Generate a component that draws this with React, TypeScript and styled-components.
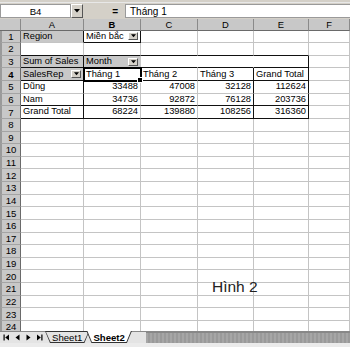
import styled, { createGlobalStyle } from "styled-components";

const GlobalStyle = createGlobalStyle`
  html, body {
    margin: 0;
    padding: 0;
    background: #ffffff;
  }
  body {
    font-family: "Liberation Sans", Arial, sans-serif;
    font-size: 9.3px;
    color: #000;
  }
`;

const GRID = "#c4c4c4";
const DARK = "#111";
const FACE = "#c8c8c8";

const Window = styled.div`
  width: 350px;
  height: 347px;
  overflow: hidden;
  display: flex;
  flex-direction: column;
  background: #d4d0c8;
`;

const Toolbar = styled.div`
  height: 3px;
  background: #d4d0c8;
  border-bottom: 1px solid #e8e8e8;
  box-sizing: border-box;
`;

const FormulaBar = styled.div`
  height: 16px;
  display: flex;
  align-items: flex-start;
  padding-top: 1px;
  box-sizing: border-box;
`;

const NameBox = styled.div`
  width: 71px;
  height: 14px;
  background: #fff;
  border: 1px solid #9a9a9a;
  box-sizing: border-box;
  display: flex;
  align-items: center;
  justify-content: center;
  font-size: 9.6px;
`;

const NameDrop = styled.div`
  width: 12px;
  height: 14px;
  box-sizing: border-box;
  background: #d4d0c8;
  border: 1px solid;
  border-color: #fff #555 #555 #fff;
  display: flex;
  align-items: center;
  justify-content: center;
`;

const EqualsArea = styled.div`
  width: 42px;
  height: 14px;
  display: flex;
  align-items: center;
  justify-content: flex-end;
  padding-right: 7px;
  box-sizing: border-box;
  font-weight: bold;
  font-size: 10px;
`;

const FormulaInput = styled.div`
  flex: 1;
  height: 14px;
  background: #fff;
  border: 1px solid #9a9a9a;
  border-right: none;
  box-sizing: border-box;
  display: flex;
  align-items: center;
  padding-left: 4px;
  font-size: 10px;
`;

const Sheet = styled.div`
  position: relative;
  height: 312px;
  overflow: hidden;
  background: #fff;
  display: grid;
  grid-template-columns: 21px 63px 57px 57px 56px 55px 1fr;
  grid-template-rows: 11.5px repeat(24, 12.63px);
`;

type Line = "grid" | "dark" | "none";

const lineColor = (l: Line) =>
  l === "dark" ? DARK : l === "grid" ? GRID : "transparent";

const Cell = styled.div<{
  $right: Line;
  $bottom: Line;
  $field?: boolean;
  $align?: "left" | "right";
  $selected?: boolean;
}>`
  position: relative;
  box-sizing: border-box;
  border-right: 1px solid ${(p) => lineColor(p.$right)};
  border-bottom: 1px solid ${(p) => lineColor(p.$bottom)};
  background: ${(p) => (p.$field ? FACE : "#fff")};
  display: flex;
  align-items: center;
  justify-content: ${(p) => (p.$align === "right" ? "flex-end" : "space-between")};
  padding: 0 2px;
  white-space: nowrap;
  overflow: visible;
  line-height: 1;
  ${(p) =>
    p.$selected &&
    `
    outline: 2px solid #000;
    outline-offset: -1px;
    z-index: 2;
  `}
`;

const FillHandle = styled.span`
  position: absolute;
  right: -3px;
  bottom: -3px;
  width: 4px;
  height: 4px;
  background: #000;
  border: 1px solid #fff;
`;

const ColHead = styled.div<{ $bold?: boolean }>`
  background: ${FACE};
  border-right: 1px solid #8a8a8a;
  border-bottom: 1px solid #6a6a6a;
  box-sizing: border-box;
  display: flex;
  align-items: center;
  justify-content: center;
  font-size: 9.4px;
  font-weight: ${(p) => (p.$bold ? "bold" : "normal")};
`;

const RowHead = styled.div<{ $bold?: boolean }>`
  background: ${FACE};
  border-left: 2px solid #9a9a9a;
  border-right: 1px solid #6a6a6a;
  border-bottom: 1px solid #a4a4a4;
  box-sizing: border-box;
  display: flex;
  align-items: center;
  justify-content: center;
  font-size: 9.6px;
  font-weight: ${(p) => (p.$bold ? "bold" : "normal")};
`;

const DropButton = styled.span`
  width: 10px;
  height: 8px;
  box-sizing: border-box;
  background: #d4d0c8;
  border: 1px solid;
  border-color: #fff #555 #555 #fff;
  display: inline-flex;
  align-items: center;
  justify-content: center;
  flex-shrink: 0;
`;

const Caption = styled.div`
  position: absolute;
  left: 212px;
  top: 260px;
  font-size: 15.5px;
  line-height: 16px;
  color: #222;
`;

const TabBar = styled.div`
  height: 12px;
  display: flex;
  align-items: stretch;
  background: #e4e4e4;
  border-top: 1px solid #888;
  box-sizing: border-box;
`;

const NavButtons = styled.div`
  width: 46px;
  display: flex;
  align-items: center;
  justify-content: space-around;
  padding: 0 1px;
  box-sizing: border-box;
`;

const NavButton = styled.span`
  display: inline-flex;
  align-items: center;
  justify-content: center;
  width: 10px;
  height: 10px;
`;

const Tabs = styled.div`
  display: flex;
  padding-left: 2px;
  width: 92px;
`;

const Tab = styled.div<{ $active?: boolean }>`
  position: relative;
  padding: 0 7px;
  margin-left: -3px;
  font-size: 9.6px;
  font-weight: ${(p) => (p.$active ? "bold" : "normal")};
  display: flex;
  align-items: center;
  z-index: ${(p) => (p.$active ? 2 : 1)};
  &::before {
    content: "";
    position: absolute;
    inset: -1px 0 0 0;
    background: #333;
    clip-path: polygon(0 0, 100% 0, calc(100% - 5px) 100%, 5px 100%);
    z-index: -2;
  }
  &::after {
    content: "";
    position: absolute;
    inset: ${(p) => (p.$active ? "-1px" : "0")} 1px 1px 1px;
    background: ${(p) => (p.$active ? "#fff" : "#e4e4e4")};
    clip-path: polygon(0 0, 100% 0, calc(100% - 4.5px) 100%, 4.5px 100%);
    z-index: -1;
  }
`;

const Scroll = styled.div`
  flex: 1;
  margin-left: 6px;
  background: repeating-linear-gradient(
      90deg,
      #a6a6a6 0 2px,
      #9a9a9a 2px 4px
    );
  border-top: 1px solid #888;
`;

const StatusStrip = styled.div`
  height: 4px;
  background: #ebebeb;
`;

function Triangle({ size = 5 }: { size?: number }) {
  return (
    <svg width={size} height={Math.ceil(size / 2) + 1} viewBox="0 0 6 4">
      <path d="M0 0 H6 L3 3.5 Z" fill="#000" />
    </svg>
  );
}

function NavIcon({ kind }: { kind: "first" | "prev" | "next" | "last" }) {
  return (
    <svg width="7" height="7" viewBox="0 0 7 7">
      {kind === "first" && (
        <>
          <rect x="0.5" y="0.5" width="1.2" height="6" fill="#000" />
          <path d="M6 0.5 V6.5 L2.2 3.5 Z" fill="#000" />
        </>
      )}
      {kind === "prev" && <path d="M5.5 0.5 V6.5 L1.5 3.5 Z" fill="#000" />}
      {kind === "next" && <path d="M1.5 0.5 V6.5 L5.5 3.5 Z" fill="#000" />}
      {kind === "last" && (
        <>
          <path d="M1 0.5 V6.5 L4.8 3.5 Z" fill="#000" />
          <rect x="5.3" y="0.5" width="1.2" height="6" fill="#000" />
        </>
      )}
    </svg>
  );
}

type CellDef = {
  text?: string;
  align?: "left" | "right";
  field?: boolean;
  drop?: boolean;
};

const columns = ["A", "B", "C", "D", "E", "F"];

const data: Record<string, CellDef> = {
  "1-1": { text: "Region", field: true },
  "1-2": { text: "Miền bắc", drop: true },
  "3-1": { text: "Sum of Sales", field: true },
  "3-2": { text: "Month", field: true, drop: true },
  "4-1": { text: "SalesRep", field: true, drop: true },
  "4-2": { text: "Tháng 1" },
  "4-3": { text: "Tháng 2" },
  "4-4": { text: "Tháng 3" },
  "4-5": { text: "Grand Total" },
  "5-1": { text: "Dũng" },
  "5-2": { text: "33488", align: "right" },
  "5-3": { text: "47008", align: "right" },
  "5-4": { text: "32128", align: "right" },
  "5-5": { text: "112624", align: "right" },
  "6-1": { text: "Nam" },
  "6-2": { text: "34736", align: "right" },
  "6-3": { text: "92872", align: "right" },
  "6-4": { text: "76128", align: "right" },
  "6-5": { text: "203736", align: "right" },
  "7-1": { text: "Grand Total" },
  "7-2": { text: "68224", align: "right" },
  "7-3": { text: "139880", align: "right" },
  "7-4": { text: "108256", align: "right" },
  "7-5": { text: "316360", align: "right" },
};

const inPivot = (c: number) => c >= 1 && c <= 5;

function rightLine(r: number, c: number): Line {
  if (c === 1 && (r === 1 || (r >= 3 && r <= 7))) return "dark";
  if (c === 2 && r === 1) return "dark";
  if (c === 4 && r >= 4 && r <= 7) return "dark";
  if (c === 5 && r >= 3 && r <= 7) return "dark";
  if (r === 3 && (c === 2 || c === 3 || c === 4)) return "none";
  return "grid";
}

function bottomLine(r: number, c: number): Line {
  if (inPivot(c) && [2, 3, 4, 6, 7].includes(r)) return "dark";
  if (c === 2 && r === 1) return "dark";
  return "grid";
}

export default function App() {
  const rows = Array.from({ length: 24 }, (_, i) => i + 1);

  return (
    <>
      <GlobalStyle />
      <Window>
        <Toolbar />
        <FormulaBar>
          <NameBox>B4</NameBox>
          <NameDrop>
            <Triangle size={6} />
          </NameDrop>
          <EqualsArea>=</EqualsArea>
          <FormulaInput>Tháng 1</FormulaInput>
        </FormulaBar>

        <Sheet>
          <ColHead />
          {columns.map((col) => (
            <ColHead key={col} $bold={col === "B"}>
              {col}
            </ColHead>
          ))}

          {rows.map((r) => (
            <RowBlock key={r} r={r} />
          ))}

          <Caption>Hình 2</Caption>
        </Sheet>

        <TabBar>
          <NavButtons>
            <NavButton>
              <NavIcon kind="first" />
            </NavButton>
            <NavButton>
              <NavIcon kind="prev" />
            </NavButton>
            <NavButton>
              <NavIcon kind="next" />
            </NavButton>
            <NavButton>
              <NavIcon kind="last" />
            </NavButton>
          </NavButtons>
          <Tabs>
            <Tab>Sheet1</Tab>
            <Tab $active>Sheet2</Tab>
          </Tabs>
          <Scroll />
        </TabBar>
        <StatusStrip />
      </Window>
    </>
  );
}

function RowBlock({ r }: { r: number }) {
  return (
    <>
      <RowHead $bold={r === 4}>{r}</RowHead>
      {columns.map((_, i) => {
        const c = i + 1;
        const def = data[`${r}-${c}`] || {};
        const selected = r === 4 && c === 2;
        return (
          <Cell
            key={c}
            $right={rightLine(r, c)}
            $bottom={bottomLine(r, c)}
            $field={def.field}
            $align={def.align}
            $selected={selected}
          >
            {def.text && <span>{def.text}</span>}
            {def.drop && (
              <DropButton>
                <Triangle size={5} />
              </DropButton>
            )}
            {selected && <FillHandle />}
          </Cell>
        );
      })}
    </>
  );
}
